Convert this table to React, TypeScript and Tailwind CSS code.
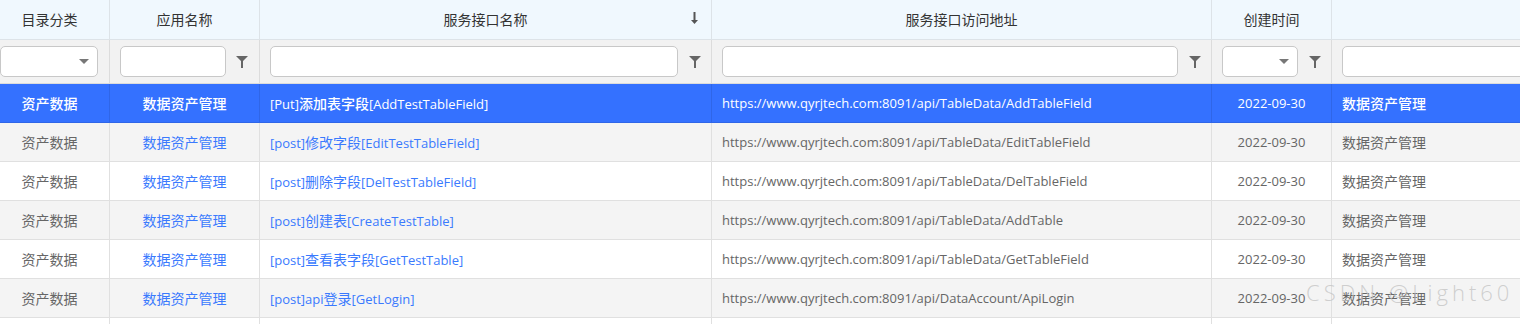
import React from "react";

const FONT = { fontFamily: '"Open Sans", "Noto Sans CJK SC", sans-serif' };

const rows = [
  { name: "[Put]添加表字段[AddTestTableField]", url: "https://www.qyrjtech.com:8091/api/TableData/AddTableField" },
  { name: "[post]修改字段[EditTestTableField]", url: "https://www.qyrjtech.com:8091/api/TableData/EditTableField" },
  { name: "[post]删除字段[DelTestTableField]", url: "https://www.qyrjtech.com:8091/api/TableData/DelTableField" },
  { name: "[post]创建表[CreateTestTable]", url: "https://www.qyrjtech.com:8091/api/TableData/AddTable" },
  { name: "[post]查看表字段[GetTestTable]", url: "https://www.qyrjtech.com:8091/api/TableData/GetTableField" },
  { name: "[post]api登录[GetLogin]", url: "https://www.qyrjtech.com:8091/api/DataAccount/ApiLogin" },
];

function T({ s }: { s: string }) {
  const parts = s.match(/[\u4e00-\u9fff]+|[^\u4e00-\u9fff]+/g) || [];
  return (
    <span>
      {parts.map((p, i) =>
        /[\u4e00-\u9fff]/.test(p) ? (
          <span key={i} className="text-[14px]">{p}</span>
        ) : (
          <span key={i}>{p}</span>
        )
      )}
    </span>
  );
}

function Funnel() {
  return (
    <svg width="12" height="12" viewBox="0 0 12 12" className="shrink-0">
      <path d="M0 0 H12 L7 5 V12 H5 V5 Z" fill="#666" />
    </svg>
  );
}

function Caret() {
  return (
    <svg width="10" height="5" viewBox="0 0 10 5">
      <path d="M0 0 H10 L5 5 Z" fill="#777" />
    </svg>
  );
}

const H = "h-[40px] bg-[#f0f8fe] border-b border-[#dde3e8] flex items-center justify-center text-[#333] text-[14px]";

export default function App() {
  return (
    <div className="relative w-[1520px] h-[324px] overflow-hidden bg-white text-[13px]" style={FONT}>
      <div className="grid grid-cols-[110px_150px_452px_500px_120px_1fr]">
        {/* header */}
        <div className={`${H} border-r pr-[10px]`}>目录分类</div>
        <div className={`${H} border-r`}>应用名称</div>
        <div className={`${H} border-r relative`}>
          服务接口名称
          <svg width="7" height="12" viewBox="0 0 7 12" className="absolute left-[431px] top-[12px]">
            <path d="M2.5 0 H4.5 V8 H7 L3.5 12 L0 8 H2.5 Z" fill="#555" />
          </svg>
        </div>
        <div className={`${H} border-r`}>服务接口访问地址</div>
        <div className={`${H} border-r`}>创建时间</div>
        <div className={H}></div>

        {/* filter row */}
        <div className="h-[44px] bg-[#f2f2f2] border-b border-r border-[#dcdcdc] flex items-center pr-[11px]">
          <div className="w-[99px] h-[31px] bg-white border border-[#c8c8c8] rounded-[5px] flex items-center justify-end pr-[8px]"><Caret /></div>
        </div>
        <div className="h-[44px] bg-[#f2f2f2] border-b border-r border-[#dcdcdc] flex items-center pl-[10px] pr-[11px] gap-[10px]">
          <div className="flex-1 h-[31px] bg-white border border-[#c8c8c8] rounded-[5px]"></div>
          <Funnel />
        </div>
        <div className="h-[44px] bg-[#f2f2f2] border-b border-r border-[#dcdcdc] flex items-center pl-[10px] pr-[10px] gap-[11px]">
          <div className="flex-1 h-[31px] bg-white border border-[#c8c8c8] rounded-[5px]"></div>
          <Funnel />
        </div>
        <div className="h-[44px] bg-[#f2f2f2] border-b border-r border-[#dcdcdc] flex items-center pl-[10px] pr-[10px] gap-[11px]">
          <div className="flex-1 h-[31px] bg-white border border-[#c8c8c8] rounded-[5px]"></div>
          <Funnel />
        </div>
        <div className="h-[44px] bg-[#f2f2f2] border-b border-r border-[#dcdcdc] flex items-center pl-[10px] pr-[10px] gap-[11px]">
          <div className="flex-1 h-[31px] bg-white border border-[#c8c8c8] rounded-[5px] flex items-center justify-end pr-[8px]"><Caret /></div>
          <Funnel />
        </div>
        <div className="h-[44px] bg-[#f2f2f2] border-b border-[#dcdcdc] flex items-center pl-[10px]">
          <div className="w-[200px] h-[31px] bg-white border border-[#c8c8c8] rounded-[5px] shrink-0"></div>
        </div>

        {/* data rows */}
        {rows.map((r, i) => {
          const sel = i === 0;
          const bg = sel ? "bg-[#3471ff] font-medium" : i % 2 === 1 ? "bg-[#f4f4f4]" : "bg-white";
          const bd = sel ? "border-[#2f66e8]" : "border-[#e0e0e0]";
          const txt = sel ? "text-white" : "text-[#666]";
          const link = sel ? "text-white" : "text-[#3a7afe]";
          const h = sel ? "h-[39px] pt-[1px]" : "h-[39px] pt-[2px]";
          return (
            <React.Fragment key={i}>
              <div className={`${h} ${bg} border-b border-r ${bd} ${txt} flex items-center justify-center pr-[10px]`}><T s="资产数据" /></div>
              <div className={`${h} ${bg} border-b border-r ${bd} ${link} flex items-center justify-center`}><T s="数据资产管理" /></div>
              <div className={`${h} ${bg} border-b border-r ${bd} ${link} flex items-center pl-[10px] whitespace-nowrap`}><T s={r.name} /></div>
              <div className={`${h} ${bg} border-b border-r ${bd} ${txt} flex items-center pl-[10px] whitespace-nowrap`}>{r.url}</div>
              <div className={`${h} ${bg} border-b border-r ${bd} ${txt} flex items-center justify-center`}>2022-09-30</div>
              <div className={`${h} ${bg} border-b ${bd} ${txt} flex items-center pl-[10px]`}><T s="数据资产管理" /></div>
            </React.Fragment>
          );
        })}
        <div className="h-[39px] border-r border-[#e0e0e0]"></div>
        <div className="h-[39px] border-r border-[#e0e0e0]"></div>
        <div className="h-[39px] border-r border-[#e0e0e0]"></div>
        <div className="h-[39px] border-r border-[#e0e0e0]"></div>
        <div className="h-[39px] border-r border-[#e0e0e0]"></div>
        <div className="h-[39px]"></div>
      </div>

      <div className="absolute left-[1306px] top-[281px] text-[22px] leading-none text-[#c4c4c4]/80 tracking-[4px] whitespace-nowrap pointer-events-none" style={{ fontFamily: '"Open Sans", sans-serif', fontWeight: 300 }}>
        CSDN @Light60
      </div>
    </div>
  );
}
